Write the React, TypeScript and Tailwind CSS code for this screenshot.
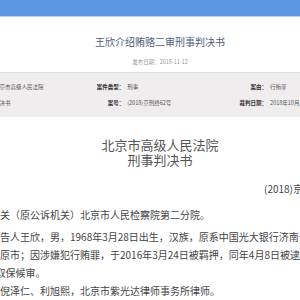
export default function App() {
  const cjk = { fontFamily: '"Noto Sans CJK SC", "Noto Sans", sans-serif' };
  return (
    <div className="w-[300px] h-[300px] overflow-hidden bg-white" style={cjk}>
      <div className="h-[17px] bg-[#5a97e0] border-b border-[#b7d0f0]" />
      <div className="w-[420px] -ml-[50px]">
        <div className="mt-[19px] text-center text-[10px] leading-[12px] text-[#4d5b7c]">王欣介绍贿赂二审刑事判决书</div>
        <div className="mt-[10px] text-center text-[5.5px] leading-[8px] text-[#999]">发布日期：2018-11-12</div>
        <div className="mt-[6px] h-[45px] bg-[#efedee] border-t border-[#e2dfe0] pt-[10px] text-[5.5px] leading-[8px]">
          <div className="flex">
            <div className="w-[139px] flex"><span className="w-[41px] text-right font-bold text-[#333]">审理法院：</span><span className="pl-[3px] text-[#555]">北京市高级人民法院</span></div>
            <div className="w-[148px] flex"><span className="w-[40px] text-right font-bold text-[#333]">案件类型：</span><span className="pl-[3px] text-[#555]">刑事</span></div>
            <div className="w-[148px] flex"><span className="w-[40px] text-right font-bold text-[#333]">案由：</span><span className="pl-[3px] text-[#555]">行贿罪</span></div>
          </div>
          <div className="flex mt-[8px]">
            <div className="w-[139px] flex"><span className="w-[41px] text-right font-bold text-[#333]">文书类型：</span><span className="pl-[3px] text-[#555]">判决书</span></div>
            <div className="w-[148px] flex"><span className="w-[40px] text-right font-bold text-[#333]">案号：</span><span className="pl-[3px] text-[#555]">(2018)京刑终62号</span></div>
            <div className="w-[148px] flex"><span className="w-[40px] text-right font-bold text-[#333]">裁判日期：</span><span className="pl-[3px] text-[#555]">2018年10月</span></div>
          </div>
        </div>
        <div className="mt-[20px] text-center text-[13px] leading-[15px] text-[#555]">
          <div>北京市高级人民法院</div>
          <div>刑事判决书</div>
        </div>
        <div className="mt-[15px] pl-[314px] whitespace-nowrap text-[10px] leading-[14px] text-[#444]">(2018)京刑终62号</div>
        <div className="mt-[10px] text-[10px] leading-[18px] text-[#444] whitespace-nowrap">
          <p className="indent-[20px]">抗诉机关（原公诉机关）北京市人民检察院第二分院。</p>
          <p className="indent-[20px] mt-[4px]">原审被告人王欣，男，1968年3月28日出生，汉族，原系中国光大银行济南分行<br />住山西省太原市；因涉嫌犯行贿罪，于2016年3月24日被羁押，同年4月8日被逮捕。<br />同年5月被取保候审。</p>
          <p className="indent-[20px]">辩护人倪泽仁、利旭熙，北京市紫光达律师事务所律师。</p>
        </div>
      </div>
    </div>
  );
}
